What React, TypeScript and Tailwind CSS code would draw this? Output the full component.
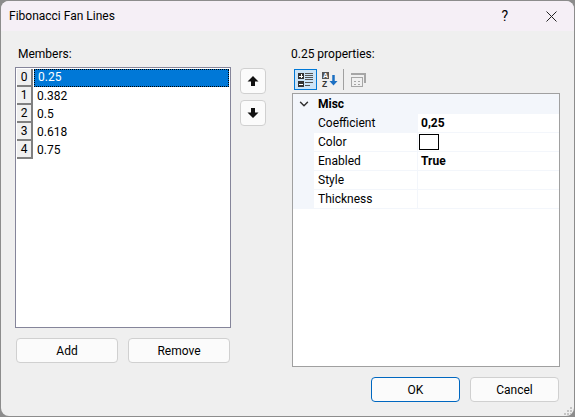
import React from 'react';
import { ChevronDown } from 'lucide-react';

const members = ['0.25', '0.382', '0.5', '0.618', '0.75'];

const properties = [
  { name: 'Coefficient', value: '0,25', selected: true },
  { name: 'Color', swatch: true },
  { name: 'Enabled', value: 'True' },
  { name: 'Style' },
  { name: 'Thickness' },
];

function DialogButton({ label, className }: { label: string; className: string }) {
  return (
    <button className={`flex items-center justify-center rounded-[4px] border bg-[#fbfbfb] text-xs text-black ${className}`}>
      {label}
    </button>
  );
}

function MoveIcon({ down }: { down?: boolean }) {
  return (
    <svg width="12" height="12" viewBox="0 0 12 12" className={down ? 'rotate-180' : ''}>
      <path d="M6 1L11.5 6.5H8V11H4V6.5H0.5z" fill="#111" />
    </svg>
  );
}

function CategorizedIcon() {
  return (
    <svg width="16" height="16" viewBox="0 0 16 16" shapeRendering="crispEdges">
      <rect x="0" y="1" width="6" height="6" fill="#333" />
      <rect x="0" y="9" width="6" height="6" fill="#333" />
      <path d="M1 4h4M3 2v4M1 12h4" stroke="#fff" />
      <path d="M7 1.5h8M7 3.5h8M7 5.5h8M7 7.5h8M7 10.5h8M7 13.5h5" stroke="#555" />
    </svg>
  );
}

function AlphabeticalIcon() {
  return (
    <svg width="18" height="17" viewBox="0 0 18 17">
      <rect x="1" y="1" width="7" height="7" fill="#555" />
      <text x="2" y="7" fontSize="7" fontWeight="700" fill="#fff" fontFamily="Liberation Sans, sans-serif">A</text>
      <text x="1" y="15.5" fontSize="8.5" fontWeight="700" fill="#333" fontFamily="Liberation Sans, sans-serif">Z</text>
      <path d="M12.5 4v8" stroke="#1b6fc2" strokeWidth="2.5" />
      <path d="M8.5 10l4 4.5 4-4.5z" fill="#1b6fc2" />
    </svg>
  );
}

function PagesIcon() {
  return (
    <svg width="15" height="14" viewBox="0 0 15 14" shapeRendering="crispEdges">
      <path d="M0 1h14v9" fill="none" stroke="#a6a6a6" strokeWidth="2" />
      <rect x="0.5" y="4.5" width="11" height="9" fill="#f0f0f0" stroke="#a6a6a6" />
      <path d="M3 8h2M7 8h2M3 11h2M7 11h2" stroke="#a6a6a6" />
    </svg>
  );
}

function ResizeGrip() {
  return (
    <svg width="9" height="8" viewBox="0 0 9 8" className="absolute bottom-[1px] right-[1px]" shapeRendering="crispEdges">
      <path d="M6 0h2v2H6zM3 3h2v2H3zM6 3h2v2H6zM0 6h2v2H0zM3 6h2v2H3zM6 6h2v2H6z" fill="#c4c4c4" />
    </svg>
  );
}

export default function App() {
  return (
    <div className="h-[417px] w-[575px] overflow-hidden bg-[#8c8c8c] font-['Roboto',sans-serif] text-xs text-black">
      <div className="relative m-px flex h-[415px] w-[573px] flex-col overflow-hidden rounded-lg bg-[#efefef]">
        {/* Title bar */}
        <div className="flex h-[30px] shrink-0 items-center bg-[#f5eff6] pl-2">
          <span className="flex-1">Fibonacci Fan Lines</span>
          <span className="mr-[38px] text-sm">?</span>
          <svg width="11" height="11" viewBox="0 0 11 11" className="mr-[17px]">
            <path d="M0.5 0.5l10 10M10.5 0.5l-10 10" stroke="#222" fill="none" />
          </svg>
        </div>

        <div className="flex flex-1 flex-col pl-[14px] pr-[14px]">
          <div className="flex flex-1">
            {/* Members */}
            <div className="flex w-[276px] shrink-0 flex-col pt-[14px]">
              <div className="h-[22px] pl-[3px] leading-[18px]">Members:</div>
              <div className="flex">
                <div className="h-[261px] w-[216px] shrink-0 border border-[#85859a] bg-white p-px">
                  {members.map((m, i) => (
                    <div key={m} className="flex h-[18px]">
                      <div className="mr-px flex h-[18px] w-[16px] shrink-0 items-center justify-center border-r-2 border-b-2 border-[#808080] bg-[#f0f0f0]">
                        {i}
                      </div>
                      <div
                        className={`flex-1 pl-[3px] ${
                          i === 0 ? 'border border-dotted border-black bg-[#0078d7] leading-[15px] text-white' : 'leading-[19px]'
                        }`}
                      >
                        {m}
                      </div>
                    </div>
                  ))}
                </div>
                <div className="ml-[9px] flex flex-col gap-[6px] pt-px">
                  <button className="flex h-[26px] w-[26px] shrink-0 items-center justify-center rounded-[4px] border border-[#d0d0d0] bg-[#fbfbfb]">
                    <MoveIcon />
                  </button>
                  <button className="flex h-[26px] w-[26px] shrink-0 items-center justify-center rounded-[4px] border border-[#d0d0d0] bg-[#fbfbfb]">
                    <MoveIcon down />
                  </button>
                </div>
              </div>
              <div className="mt-[10px] flex w-[216px] gap-[10px] pl-px">
                <DialogButton label="Add" className="h-[25px] w-[102px] border-[#d0d0d0]" />
                <DialogButton label="Remove" className="h-[25px] w-[102px] border-[#d0d0d0]" />
              </div>
            </div>

            {/* Properties */}
            <div className="flex flex-1 flex-col pt-[14px]">
              <div className="h-[24px] leading-[18px]">0.25 properties:</div>
              <div className="flex h-[24px] items-start gap-[3px] pl-[3px]">
                <div className="flex h-[21px] w-[23px] items-center justify-center border border-[#0078d7] bg-[#cce4f7]">
                  <CategorizedIcon />
                </div>
                <div className="flex h-[21px] w-[20px] items-center justify-center">
                  <AlphabeticalIcon />
                </div>
                <div className="mr-[4px] h-[21px] w-px bg-[#a0a0a0]" />
                <div className="pt-[4px]">
                  <PagesIcon />
                </div>
              </div>
              <div className="ml-px h-[274px] w-[268px] border border-[#a0a0a0] bg-white">
                <div className="flex h-[20px] items-center bg-[#f3f6fb] font-bold">
                  <ChevronDown className="ml-[4px] h-[14px] w-[14px] text-[#333]" strokeWidth={2.5} />
                  <span className="ml-[7px]">Misc</span>
                </div>
                {properties.map((p) => (
                  <div key={p.name} className="flex h-[19px]">
                    <div className="w-[21px] bg-[#f3f6fb]" />
                    <div
                      className={`w-[104px] border-r border-b border-[#f3f6fb] pl-[4px] leading-[18px] ${
                        p.selected ? 'bg-[#f3f6fb]' : ''
                      }`}
                    >
                      {p.name}
                    </div>
                    <div className="flex flex-1 items-center border-b border-[#f3f6fb] pl-[3px] font-bold leading-[18px]">
                      {p.swatch ? <div className="ml-[-2px] h-[16px] w-[20px] border border-black bg-white" /> : p.value}
                    </div>
                  </div>
                ))}
              </div>
            </div>
          </div>

          {/* Footer */}
          <div className="flex justify-end gap-[10px] pb-[14px] pr-px pt-[9px]">
            <DialogButton label="OK" className="h-[25px] w-[89px] border-[#0067c0]" />
            <DialogButton label="Cancel" className="h-[25px] w-[89px] border-[#d0d0d0]" />
          </div>
        </div>
        <ResizeGrip />
      </div>
    </div>
  );
}
